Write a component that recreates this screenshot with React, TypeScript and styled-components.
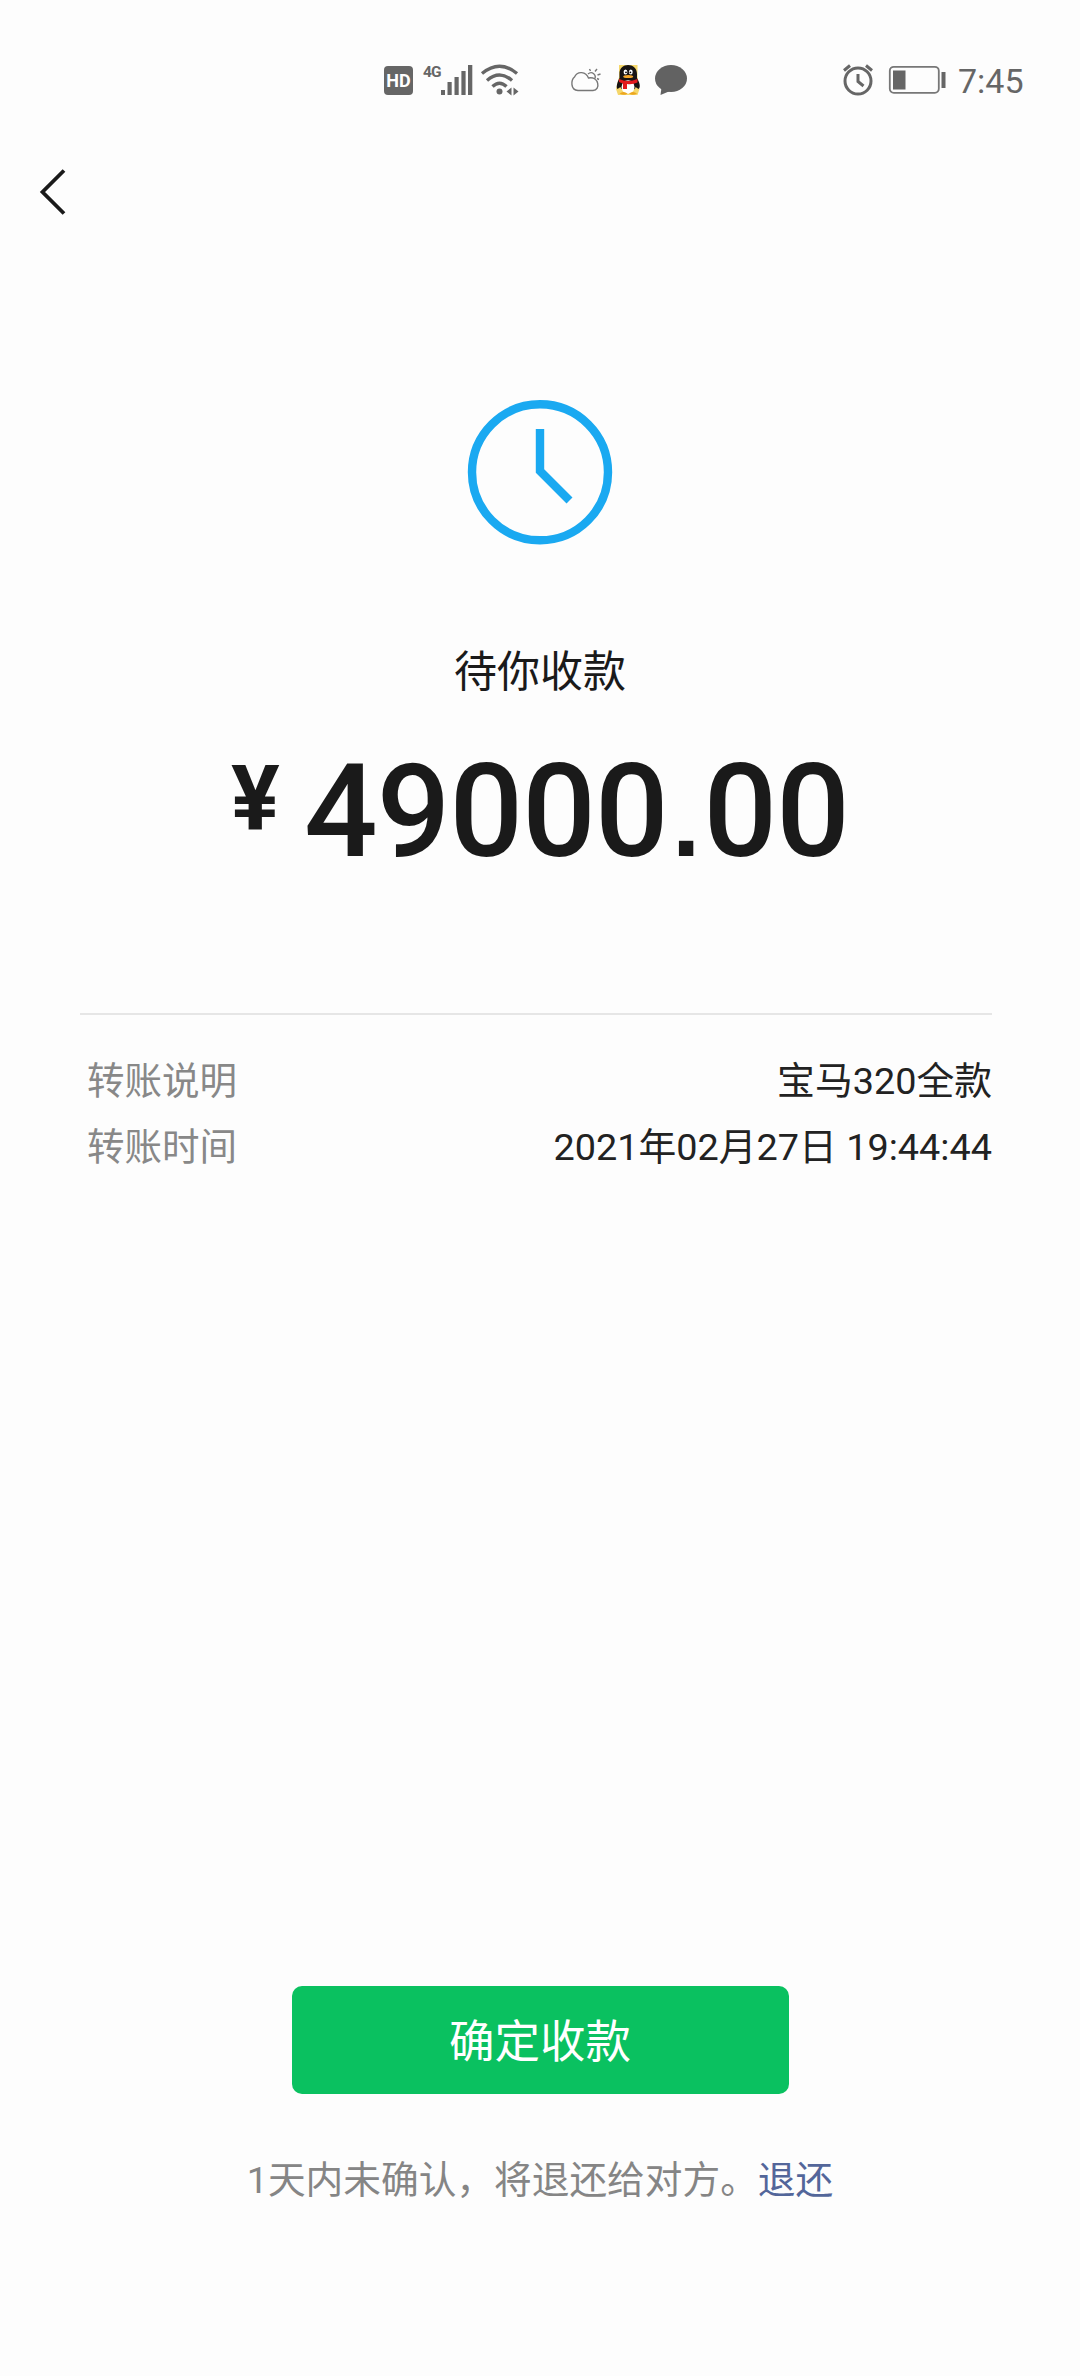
import React from "react";
import styled, { createGlobalStyle } from "styled-components";

const GlobalStyle = createGlobalStyle`
  body { margin: 0; background: #fdfdfd; }
  * { box-sizing: border-box; }
`;

const Screen = styled.main`
  width: 1080px;
  height: 2376px;
  display: flex;
  flex-direction: column;
  background: #fdfdfd;
  color: #1a1a1a;
  font-family: Roboto, "Noto Sans CJK SC", sans-serif;
  overflow: hidden;
`;

const StatusBar = styled.header`
  height: 112px;
  padding: 60px 0 0 380px;
  display: flex;
  align-items: flex-start;
`;

const StatusIcon = styled.svg<{ $gap?: number }>`
  display: block;
  flex: none;
  height: 40px;
  margin-left: ${(p) => p.$gap ?? 0}px;
`;

const HdBadge = styled.span`
  width: 29px;
  height: 29px;
  margin: 6px 0 0 4px;
  border-radius: 4px;
  background: #666;
  color: #fff;
  font: 700 18px/29px Roboto, sans-serif;
  text-align: center;
`;

const NetworkType = styled.span`
  width: 17px;
  margin: 3px 0 0 10px;
  color: #666;
  font: 700 15.5px/18px Roboto, sans-serif;
  letter-spacing: -1px;
`;

const Time = styled.time`
  margin: 1px 0 0 10px;
  font-size: 34px;
  line-height: 40px;
  color: #666;
`;

const NavBar = styled.nav`
  height: 160px;
  padding: 52px 0 0 32px;
`;

const BackButton = styled.button`
  display: block;
  padding: 0;
  border: 0;
  background: none;
  svg { display: block; }
`;

const Summary = styled.section`
  height: 741px;
  padding-top: 120px;
  display: flex;
  flex-direction: column;
  align-items: center;
`;

const Title = styled.h1`
  margin: 88px 0 0;
  font-size: 43px;
  font-weight: 400;
  line-height: 64px;
`;

const Amount = styled.div`
  margin-top: 32px;
  display: flex;
  align-items: flex-start;
  font-weight: 500;
`;

const Currency = styled.span`
  width: 73px;
  margin-top: 9px;
  font-size: 91px;
  font-weight: 700;
  line-height: 108px;
`;

const Figure = styled.span`
  font-size: 129.5px;
  line-height: 152px;
  letter-spacing: -0.8px;
`;

const DecimalPoint = styled.span`
  font-family: "Liberation Sans", sans-serif;
  font-weight: 700;
  font-size: 102px;
  line-height: 1;
  padding: 0 4px;
`;

const Details = styled.dl`
  width: 912px;
  margin: 0 0 0 80px;
  padding: 33px 0 0 7px;
  border-top: 2px solid #e6e6e6;
`;

const Row = styled.div`
  height: 66px;
  display: flex;
  justify-content: space-between;
  font-size: 37.5px;
  line-height: 66px;
`;

const Label = styled.dt`
  color: #888;
`;

const Value = styled.dd`
  margin: 0;
  font-size: 37.8px;
  color: #222;
`;

const Footer = styled.footer`
  margin-top: auto;
  height: 390px;
  display: flex;
  flex-direction: column;
  align-items: center;
`;

const ConfirmButton = styled.button`
  width: 497px;
  height: 108px;
  padding: 6px 0 0;
  border: 0;
  border-radius: 10px;
  background: #0ac160;
  color: #fff;
  font: 400 45.5px/1 Roboto, "Noto Sans CJK SC", sans-serif;
`;

const Notice = styled.p`
  margin: 58px 0 0;
  font-size: 37.7px;
  line-height: 56px;
  color: #858585;
  white-space: nowrap;
`;

const ReturnLink = styled.a`
  color: #53669a;
`;

const Signal = () => (
  <StatusIcon width="34" viewBox="440 60 34 40" fill="#666">
    <rect x="441" y="90" width="4" height="5" />
    <rect x="447.5" y="82" width="4.2" height="13" />
    <rect x="454.5" y="77" width="4.2" height="18" />
    <rect x="461.4" y="71" width="4.2" height="24" />
    <rect x="468" y="65" width="4.3" height="30" />
  </StatusIcon>
);

const Wifi = () => (
  <StatusIcon width="42" $gap={5} viewBox="479 60 42 40" fill="none" stroke="#666" strokeWidth="3.4">
    <path d="M482 73.5Q499.5 59 517 73.5M487 80.5Q499.5 69.5 512 80.5M492.5 86.500Q499.500 80 506.500 86.500" />
    <circle cx="499.5" cy="91.5" r="3" fill="#666" stroke="none" />
    <path d="M511.500 87.500v8l-5-4zM513.500 87.500v8l5-4z" fill="#666" stroke="none" />
  </StatusIcon>
);

const Weather = () => (
  <StatusIcon width="36" $gap={48} viewBox="569 60 36 40" fill="none" stroke="#777" strokeWidth="1.400">
    <path d="M578 90.500C570 90 571 80 574.500 77C577.500 70.500 586 71.500 588.500 78C599 76 601 90 593 90.500Z" />
    <path d="M588 74C592 70.500 597 75 594.500 79M590.500 71l-1-2M595 71.500l2-2.500M597.500 75l3-1M597 78.500l2 1" />
  </StatusIcon>
);

const Penguin = () => (
  <StatusIcon width="30" $gap={8} viewBox="613 60 30 40">
    <path d="M619 65h18.500v12l2 12-2 6h-19.500l-2-6 3-12z" fill="#f5d76b" />
    <path d="M619.500 78V74C619 62 637 62 637 74v4c4 7 3 10 1.500 11l-3-2c0 5-14 5-15 0l-3 2c-1.500-2-.5-6 2-11z" fill="#171313" />
    <ellipse cx="628" cy="87" rx="6.500" ry="6.800" fill="#fff" />
    <ellipse cx="625.500" cy="72" rx="1.900" ry="2.600" fill="#fff" />
    <ellipse cx="630.800" cy="72" rx="1.900" ry="2.600" fill="#fff" />
    <circle cx="626" cy="72.300" r=".9" />
    <circle cx="630.400" cy="72.300" r=".9" />
    <ellipse cx="628.200" cy="76.500" rx="5" ry="1.600" fill="#f4a62a" />
    <path d="M619 79Q628 83 637.500 79v3.500Q632 85 627 84v5h-4v-5.500l-4-1.500z" fill="#e3191d" />
    <path d="M619.500 93.500q4-3 8 0q-3 2.500-8 0zM629 93.500q4-3 8 0q-4 2.500-8 0z" fill="#eda61f" />
  </StatusIcon>
);

const Bubble = () => (
  <StatusIcon width="36" $gap={10} viewBox="653 60 36 40" fill="#626262">
    <ellipse cx="671" cy="78.500" rx="16" ry="13.500" />
    <path d="M661.500 87.500L660.500 95L670 91Z" />
  </StatusIcon>
);

const Alarm = () => (
  <StatusIcon width="34" $gap={152} viewBox="841 60 34 40" fill="none" stroke="#666" strokeWidth="3">
    <circle cx="858" cy="81" r="13" />
    <path d="M858 74v7.500l5.500 4.500M844 70.500l6-5M872 70.500l-6-5" />
  </StatusIcon>
);

const Battery = () => (
  <StatusIcon width="60" $gap={13} viewBox="888 60 60 40" fill="#666">
    <rect x="889.800" y="66.800" width="49" height="26" rx="4" fill="none" stroke="#777" strokeWidth="1.800" />
    <rect x="893" y="70.500" width="12.500" height="19" />
    <rect x="941.500" y="72" width="4" height="16" />
  </StatusIcon>
);

export default function App() {
  return (
    <Screen>
      <GlobalStyle />
      <StatusBar>
        <HdBadge>HD</HdBadge>
        <NetworkType>4G</NetworkType>
        <Signal />
        <Wifi />
        <Weather />
        <Penguin />
        <Bubble />
        <Alarm />
        <Battery />
        <Time>7:45</Time>
      </StatusBar>
      <NavBar>
        <BackButton aria-label="返回">
          <svg width="40" height="56" viewBox="32 164 40 56" fill="none" stroke="#1a1a1a" strokeWidth="3.800">
            <path d="M64 170.500L42.500 192L64 213.500" />
          </svg>
        </BackButton>
      </NavBar>
      <Summary>
        <svg width="160" height="160" viewBox="0 0 160 160" fill="none" stroke="#1aa9f1" strokeWidth="8.400">
          <circle cx="80" cy="80.300" r="68" />
          <path d="M80 37V79L109.500 108.500" />
        </svg>
        <Title>待你收款</Title>
        <Amount>
          <Currency>¥</Currency>
          <Figure>49000<DecimalPoint>.</DecimalPoint>00</Figure>
        </Amount>
      </Summary>
      <Details>
        <Row>
          <Label>转账说明</Label>
          <Value>宝马320全款</Value>
        </Row>
        <Row>
          <Label>转账时间</Label>
          <Value>2021年02月27日 19:44:44</Value>
        </Row>
      </Details>
      <Footer>
        <ConfirmButton>确定收款</ConfirmButton>
        <Notice>
          1天内未确认，将退还给对方。<ReturnLink>退还</ReturnLink>
        </Notice>
      </Footer>
    </Screen>
  );
}
